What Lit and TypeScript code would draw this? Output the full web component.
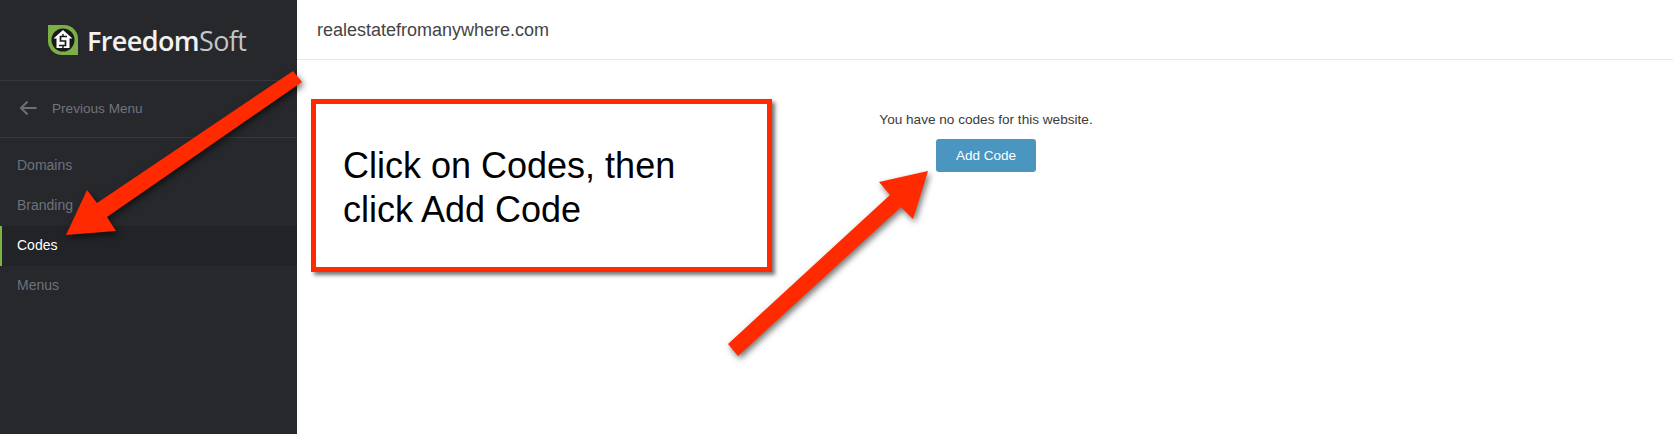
import { LitElement, html, css, svg } from "lit";
import { customElement } from "lit/decorators.js";

const items = ["Domains", "Branding", "Codes", "Menus"];

@customElement("app-root")
export class AppRoot extends LitElement {
  static styles = css`
    :host {
      display: block;
      position: relative;
      width: 1673px;
      height: 434px;
      overflow: hidden;
      background: #fff;
      font-family: "Liberation Sans", Arial, sans-serif;
    }
    .page { display: flex; height: 434px; }
    .side { width: 297px; flex: none; background: #26282c; display: flex; flex-direction: column; }
    .brand {
      height: 81px;
      box-sizing: border-box;
      border-bottom: 1px solid #36383c;
      display: flex;
      align-items: center;
      padding: 2px 0 0 48px;
      gap: 9px;
    }
    .logo { width: 30px; height: 30px; flex: none; display: block; margin-top: -2px; }
    .word { font-family: "Open Sans", sans-serif; font-size: 27px; letter-spacing: -0.6px; line-height: 30px; color: #f2f2f2; font-weight: 600; }
    .word span { font-weight: 400; color: #c4c5c6; }
    .prev {
      height: 57px;
      box-sizing: border-box;
      border-bottom: 1px solid #36383c;
      display: flex;
      align-items: center;
      padding: 0 0 2px 19px;
      gap: 15px;
      color: #70747f;
      font-size: 13.6px;
    }
    .prev svg { width: 18px; height: 16px; display: block; flex: none; }
    nav { padding-top: 8px; display: flex; flex-direction: column; }
    .item {
      height: 40px;
      box-sizing: border-box;
      display: flex;
      align-items: center;
      padding: 0 0 2px 17px;
      font-size: 14px;
      color: #6e727c;
    }
    .item.on {
      color: #fff;
      background: #222327;
      box-shadow: inset 2px 0 0 #7cb342;
    }
    main { flex: 1; display: flex; flex-direction: column; min-width: 0; }
    header {
      height: 60px;
      box-sizing: border-box;
      border-bottom: 1px solid #e9e9e9;
      display: flex;
      align-items: center;
      padding: 2px 0 0 20px;
      font-size: 18px;
      color: #444;
    }
    .content { display: flex; flex-direction: column; align-items: center; padding: 52px 0 0 2px; }
    .msg { font-size: 13.6px; line-height: 16px; color: #3a3a3a; }
    .btn {
      margin-top: 11px;
      width: 100px;
      height: 33px;
      border: 0;
      padding: 0;
      border-radius: 3px;
      background: #4a96c0;
      color: #fff;
      font: 13.5px "Liberation Sans", Arial, sans-serif;
    }
    .callout {
      position: absolute;
      left: 311px;
      top: 99px;
      width: 461px;
      height: 173px;
      box-sizing: border-box;
      border: 5px solid #ff2a00;
      background: #fff;
      box-shadow: 3px 3px 4px rgba(0, 0, 0, 0.55);
      padding: 40px 0 0 27px;
      font-size: 36px;
      line-height: 44px;
      color: #000;
    }
    .arrows {
      position: absolute;
      inset: 0;
      width: 1673px;
      height: 434px;
      pointer-events: none;
    }
    .arrows polygon { fill: #ff2a00; filter: drop-shadow(2px 3px 3px rgba(0, 0, 0, 0.55)); }
  `;

  render() {
    return html`
      <div class="page">
        <aside class="side">
          <div class="brand">
            <svg class="logo" viewBox="0 0 30 30">
              <path d="M0 0H16A14 14 0 0 1 30 14V30H14A14 14 0 0 1 0 16Z" fill="#7cb047" />
              <circle cx="15" cy="15" r="11.5" fill="#17191b" />
              <path d="M15 5L24.5 13.5H21.5V23H8.5V13.5H5.5Z" fill="#fff" />
              <path d="M19 11.5H12.5V16H17.5V20.5H11" fill="none" stroke="#17191b" stroke-width="1.7" />
              <path d="M15 9V11.5M15 20.5V23" stroke="#17191b" stroke-width="1.4" />
            </svg>
            <div class="word">Freedom<span>Soft</span></div>
          </div>
          <div class="prev">
            <svg viewBox="0 0 18 16">
              <path d="M17.5 8H2M8.5 1.5L2 8L8.5 14.5" fill="none" stroke="#6b6f7a" stroke-width="2" />
            </svg>
            <span>Previous Menu</span>
          </div>
          <nav>
            ${items.map((t) => html`<div class="item ${t === "Codes" ? "on" : ""}">${t}</div>`)}
          </nav>
        </aside>
        <main>
          <header>realestatefromanywhere.com</header>
          <div class="content">
            <div class="msg">You have no codes for this website.</div>
            <button class="btn">Add Code</button>
          </div>
        </main>
      </div>
      <div class="callout">Click on Codes, then<br />click Add Code</div>
      <svg class="arrows" viewBox="0 0 1673 434">
        ${svg`<polygon points="293,71 302,82 107,217 116,231 66,235 87,190 97,203" />`}
        ${svg`<polygon points="728,344 738,356 901,207 913,219 928,171 879,182 890,195" />`}
      </svg>
    `;
  }
}
